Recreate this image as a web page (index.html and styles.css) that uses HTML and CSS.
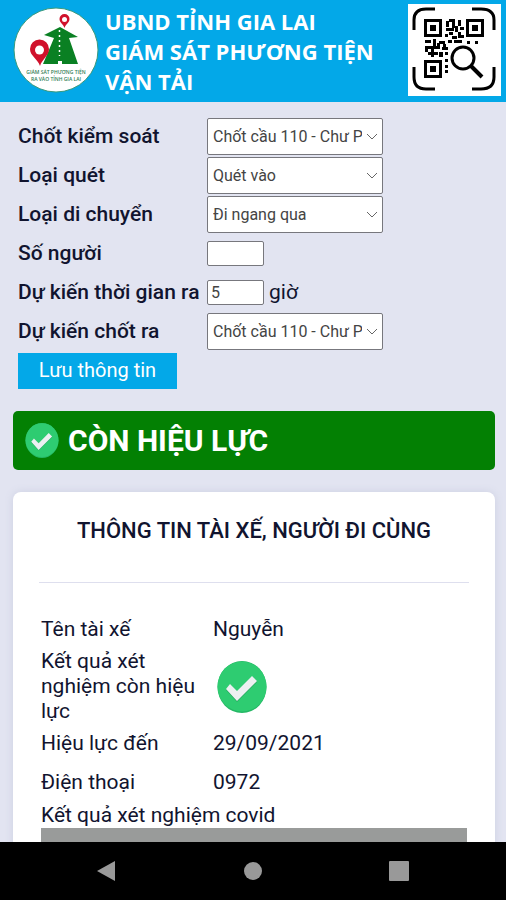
FILE: index.html
```html
<!DOCTYPE html>
<html lang="vi">
<head>
<meta charset="utf-8">
<meta name="viewport" content="width=device-width, initial-scale=1">
<title>Giám sát phương tiện vận tải</title>
<link rel="stylesheet" href="styles.css">
</head>
<body>
<svg class="defs" aria-hidden="true">
  <symbol id="check" viewBox="0 0 50 52">
    <ellipse cx="25" cy="26" rx="24.500" ry="26" fill="#25b765"/>
    <ellipse cx="25" cy="25.500" rx="24.500" ry="25" fill="#2ecc71"/>
    <path d="M9 29l4-5 7 7 16-15 4 5-20 20z" fill="#27a85f"/>
    <path d="M9 28l4-5 7 7 15-15 5 5-20 20z" fill="#ecf0f1"/>
  </symbol>
</svg>
<header class="header">
  <svg class="logo" viewBox="0 0 86 86" role="img" aria-label="Logo">
    <circle cx="43" cy="43" r="42" fill="#fff" stroke="#3c9a7c"/>
    <path d="M47 20l18 10-9 1 9 26H30l11-26-10-3z" fill="#0a8023"/>
    <path d="M46.500 23v26" stroke="#fff" stroke-width="1.500" stroke-dasharray="2 3"/>
    <path d="M47 54v3" stroke="#fff" stroke-width="4"/>
    <path d="M27 59c-2-7-10-10-10-17a9.500 9.500 0 0 1 19 0c0 7-7 10-9 17z" fill="#d0112b"/>
    <circle cx="26.500" cy="43" r="4.500" fill="#fff"/>
    <path d="M51.500 21c-1-4-5-5-5-9a5 5 0 0 1 10 0c0 4-4 5-5 9z" fill="#d0112b"/>
    <circle cx="51.500" cy="12.500" r="2.500" fill="#fff"/>
    <text x="43" y="67" class="logo-text">GIÁM SÁT PHƯƠNG TIỆN</text>
    <text x="43" y="74" class="logo-text">RA VÀO TỈNH GIA LAI</text>
  </svg>
  <h1 class="brand">UBND TỈNH GIA LAI<br>GIÁM SÁT PHƯƠNG TIỆN<br>VẬN TẢI</h1>
  <button class="scan" type="button" aria-label="Quét mã QR">
    <svg viewBox="0 0 93 92" aria-hidden="true">
      <g fill="none" stroke="#000" stroke-width="3">
        <path d="M6 26V16Q6 5 18 5h9M64 5h9q13 0 13 11v10M6 63v10q0 12 12 12h9M64 85h9q13 0 13-12V63"/>
        <path d="M17.500 16.500h15v15h-15zM59.500 16.500h15v15h-15zM17.500 57.500h15v15h-15z"/>
        <circle cx="55" cy="54" r="11"/>
        <path d="M63 62l11 11" stroke-width="4"/>
      </g>
      <path d="M22 21h6v6h-6zM64 21h6v6h-6zM22 62h6v6h-6zM38 17h3v6h-3zM41 15h6v3h-6zM44 18h3v6h-3zM38 24h8v3h-8zM50 16h3v6h-3zM47 22h3v6h-3zM52 23h4v3h-4zM41 28h4v3h-4zM50 28h3v6h-3zM37 30h3v3h-3zM44 32h5v3h-5zM53 31h3v3h-3zM40 36h4v3h-4zM46 36h8v3h-8zM59 37h3v3h-3zM67 37h3v3h-3zM17 36h6v3h-6zM25 35h3v8h-3zM17 42h15v3H17zM20 48h10v3H20zM17 45h3v3h-3zM23 45h3v8h-3zM31 37h6v3h-6zM29 39h3v6h-3zM34 43h6v3h-6zM31 48h4v5h-4zM37 48h3v3h-3zM35 40h3v3h-3zM37 55h3v3h-3zM37 61h3v3h-3zM37 66h3v3h-3z"/>
    </svg>
  </button>
</header>
<main class="main">
  <form class="form">
    <label for="post">Chốt kiểm soát</label>
    <div class="field"><select id="post"><option>Chốt cầu 110 - Chư Pưh</option></select></div>
    <label for="scan-type">Loại quét</label>
    <div class="field"><select id="scan-type"><option>Quét vào</option></select></div>
    <label for="move-type">Loại di chuyển</label>
    <div class="field"><select id="move-type"><option>Đi ngang qua</option></select></div>
    <label for="people">Số người</label>
    <div class="field"><input id="people" type="text"></div>
    <label for="hours">Dự kiến thời gian ra</label>
    <div class="field"><input id="hours" type="text" value="5"><span>giờ</span></div>
    <label for="exit-post">Dự kiến chốt ra</label>
    <div class="field"><select id="exit-post"><option>Chốt cầu 110 - Chư Pưh</option></select></div>
    <button class="save" type="button">Lưu thông tin</button>
  </form>
  <div class="banner">
    <svg class="banner-icon" aria-hidden="true"><use href="#check"/></svg>
    <strong>CÒN HIỆU LỰC</strong>
  </div>
  <section class="card">
    <h2>THÔNG TIN TÀI XẾ, NGƯỜI ĐI CÙNG</h2>
    <dl class="details">
      <dt>Tên tài xế</dt><dd>Nguyễn</dd>
      <dt>Kết quả xét nghiệm còn hiệu lực</dt>
      <dd><svg class="result-icon" role="img" aria-label="Còn hiệu lực"><use href="#check"/></svg></dd>
      <dt>Hiệu lực đến</dt><dd>29/09/2021</dd>
      <dt>Điện thoại</dt><dd>0972</dd>
    </dl>
    <p class="caption">Kết quả xét nghiệm covid</p>
    <div class="photo"></div>
  </section>
</main>
<nav class="system-nav">
  <button type="button" aria-label="Quay lại"><svg viewBox="0 0 20 22"><path d="M0 11L18 1v20z"/></svg></button>
  <button type="button" aria-label="Trang chủ"><svg viewBox="0 0 20 22"><circle cx="10" cy="11" r="9"/></svg></button>
  <button type="button" aria-label="Gần đây"><svg viewBox="0 0 20 22"><rect y="1" width="20" height="20" rx="1"/></svg></button>
</nav>
</body>
</html>
```
FILE: styles.css
```css
* {
  box-sizing: border-box;
}

body {
  display: flex;
  flex-direction: column;
  height: 100vh;
  margin: 0;
  background: #e2e4f1;
  color: #11142f;
  font: 21px/25px Roboto, sans-serif;
}

button {
  border: 0;
  padding: 0;
  font: inherit;
}

.defs {
  position: absolute;
  width: 0;
  height: 0;
}

.header {
  display: flex;
  flex: none;
  align-items: center;
  gap: 6px;
  padding: 4px 5px 6px 13px;
  background: #03a8e8;
}

.logo {
  flex: none;
  width: 86px;
  height: 86px;
}

.logo-text {
  fill: #2f7d55;
  font: 600 5px "Open Sans", sans-serif;
  text-anchor: middle;
}

.brand {
  flex: 1;
  margin: 0;
  padding-top: 2px;
  color: #fff;
  font: bold 22px/30px "Open Sans", sans-serif;
  white-space: nowrap;
}

.scan {
  flex: none;
  width: 93px;
  height: 92px;
  background: #fff;
}

.scan svg {
  display: block;
}

.main {
  flex: 1;
  min-height: 0;
  overflow: hidden;
  padding: 15px 11px 0 13px;
}

.form {
  display: grid;
  grid-template-columns: 189px 1fr;
  grid-auto-rows: 39px;
  align-items: center;
  padding-left: 5px;
}

.form label {
  font-weight: 500;
  white-space: nowrap;
}

.field {
  display: flex;
  align-items: center;
  gap: 5px;
}

.field input,
.field select {
  height: 37px;
  border: 1px solid #77777d;
  border-radius: 2px;
  background: #fff;
  color: #444;
  font: 16px Roboto, sans-serif;
}

.field select {
  width: 176px;
  padding: 0 20px 0 5px;
  appearance: none;
  background: #fff url("data:image/svg+xml,%3Csvg xmlns='http://www.w3.org/2000/svg' width='12' height='8'%3E%3Cpath d='M1 1l5 5 5-5' fill='none' stroke='%23666'/%3E%3C/svg%3E") no-repeat right 4px center;
}

.field input {
  width: 57px;
  height: 25px;
  padding: 0 3px;
}

.save {
  justify-self: start;
  width: 159px;
  height: 36px;
  background: #03a8e8;
  color: #fff;
  font-size: 20px;
}

.banner {
  display: flex;
  align-items: center;
  gap: 9px;
  height: 59px;
  margin-top: 21px;
  padding: 0 12px;
  border-radius: 5px;
  background: #038003;
  color: #fff;
  font-size: 30px;
}

.banner-icon {
  width: 34px;
  height: 35px;
}

.card {
  margin-top: 22px;
  padding: 0 26px;
  border-radius: 8px;
  background: #fff;
  box-shadow: 0 0 8px #cdd0e2;
}

.card h2 {
  margin: 0;
  padding: 26px 0 39px;
  border-bottom: 1px solid #dedfee;
  font-size: 22px;
  font-weight: 500;
  text-align: center;
  white-space: nowrap;
}

.details {
  display: grid;
  grid-template-columns: 172px 1fr;
  grid-auto-rows: minmax(39px, auto);
  align-items: center;
  margin: 0;
  padding: 27px 2px 1px;
}

.details dt {
  padding-right: 12px;
}

.details dd {
  margin: 0;
}

.result-icon {
  display: block;
  width: 50px;
  height: 52px;
  margin-left: 4px;
}

.caption {
  margin: 0;
  padding: 0 2px;
}

.photo {
  height: 300px;
  margin: 0 2px;
  background: #999b9a;
}

.system-nav {
  display: flex;
  flex: none;
  align-items: center;
  justify-content: space-between;
  height: 58px;
  padding: 0 97px;
  background: #000;
}

.system-nav button {
  background: none;
}

.system-nav svg {
  display: block;
  width: 20px;
  height: 22px;
  fill: #999;
}
```
